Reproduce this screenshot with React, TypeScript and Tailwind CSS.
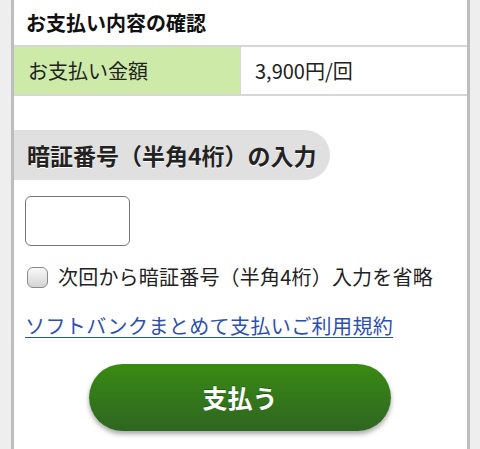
import React from 'react';

const font = { fontFamily: '"Noto Sans CJK JP", "Noto Sans", sans-serif' };

export default function App() {
  return (
    <div className="w-[480px] h-[449px] overflow-hidden bg-[#eeeeee]" style={font}>
      <div className="ml-[11px] w-[459px] h-[449px] border-x-[3px] border-[#bdbdbd] bg-white">
        {/* Confirmation */}
        <div className="h-[47px] flex items-center pl-3 border-b-2 border-[#d6d6d6]">
          <h2 className="text-[20px] leading-none font-bold text-[#111]">お支払い内容の確認</h2>
        </div>
        <div className="flex h-[49px] border-b-2 border-[#d6d6d6]">
          <div className="w-[227px] bg-[#cdeaa9] flex items-center pl-[14px] text-[20px] text-[#222] border-r border-[#d6d6d6]">
            お支払い金額
          </div>
          <div className="flex items-center pl-[14px] text-[20px] text-[#222]">3,900円/回</div>
        </div>

        {/* PIN */}
        <div className="mt-[34px] w-[316px] h-[50px] bg-[#e0e0e0] rounded-r-full flex items-center pl-[13px]">
          <h3 className="text-[23px] leading-none font-bold text-[#222] [text-shadow:0_1px_0_#fff]">
            暗証番号（半角4桁）の入力
          </h3>
        </div>
        <div className="pl-[11px] mt-[16px]">
          <input
            type="text"
            className="w-[105px] h-[50px] rounded-[6px] border border-[#777] bg-white outline-none"
          />
        </div>
        <label className="flex items-center gap-[10px] pl-[13px] mt-[20px] h-[22px] text-[20px] text-[#222]">
          <span className="block shrink-0 w-[21px] h-[21px] rounded-[6px] border-[1.5px] border-[#8a8a8a] bg-gradient-to-b from-[#fafafa] to-[#d4d4d4]"></span>
          <span className="tracking-[0.2px]">次回から暗証番号（半角4桁）入力を省略</span>
        </label>
        <div className="pl-[11px] mt-[24px]">
          <a href="#" className="text-[20px] leading-[28px] tracking-[0.4px] text-[#2b50b0] underline underline-offset-[3px] decoration-1">
            ソフトバンクまとめて支払いご利用規約
          </a>
        </div>
        <div className="flex pl-[75px] mt-[24px]">
          <button className="w-[302px] h-[67px] rounded-full bg-gradient-to-b from-[#398b11] to-[#2e651f] text-white text-[25px] font-bold shadow-[0_3px_5px_rgba(0,0,0,0.35)] [text-shadow:0_-1px_0_rgba(0,0,0,0.3)]">
            支払う
          </button>
        </div>
      </div>
    </div>
  );
}
